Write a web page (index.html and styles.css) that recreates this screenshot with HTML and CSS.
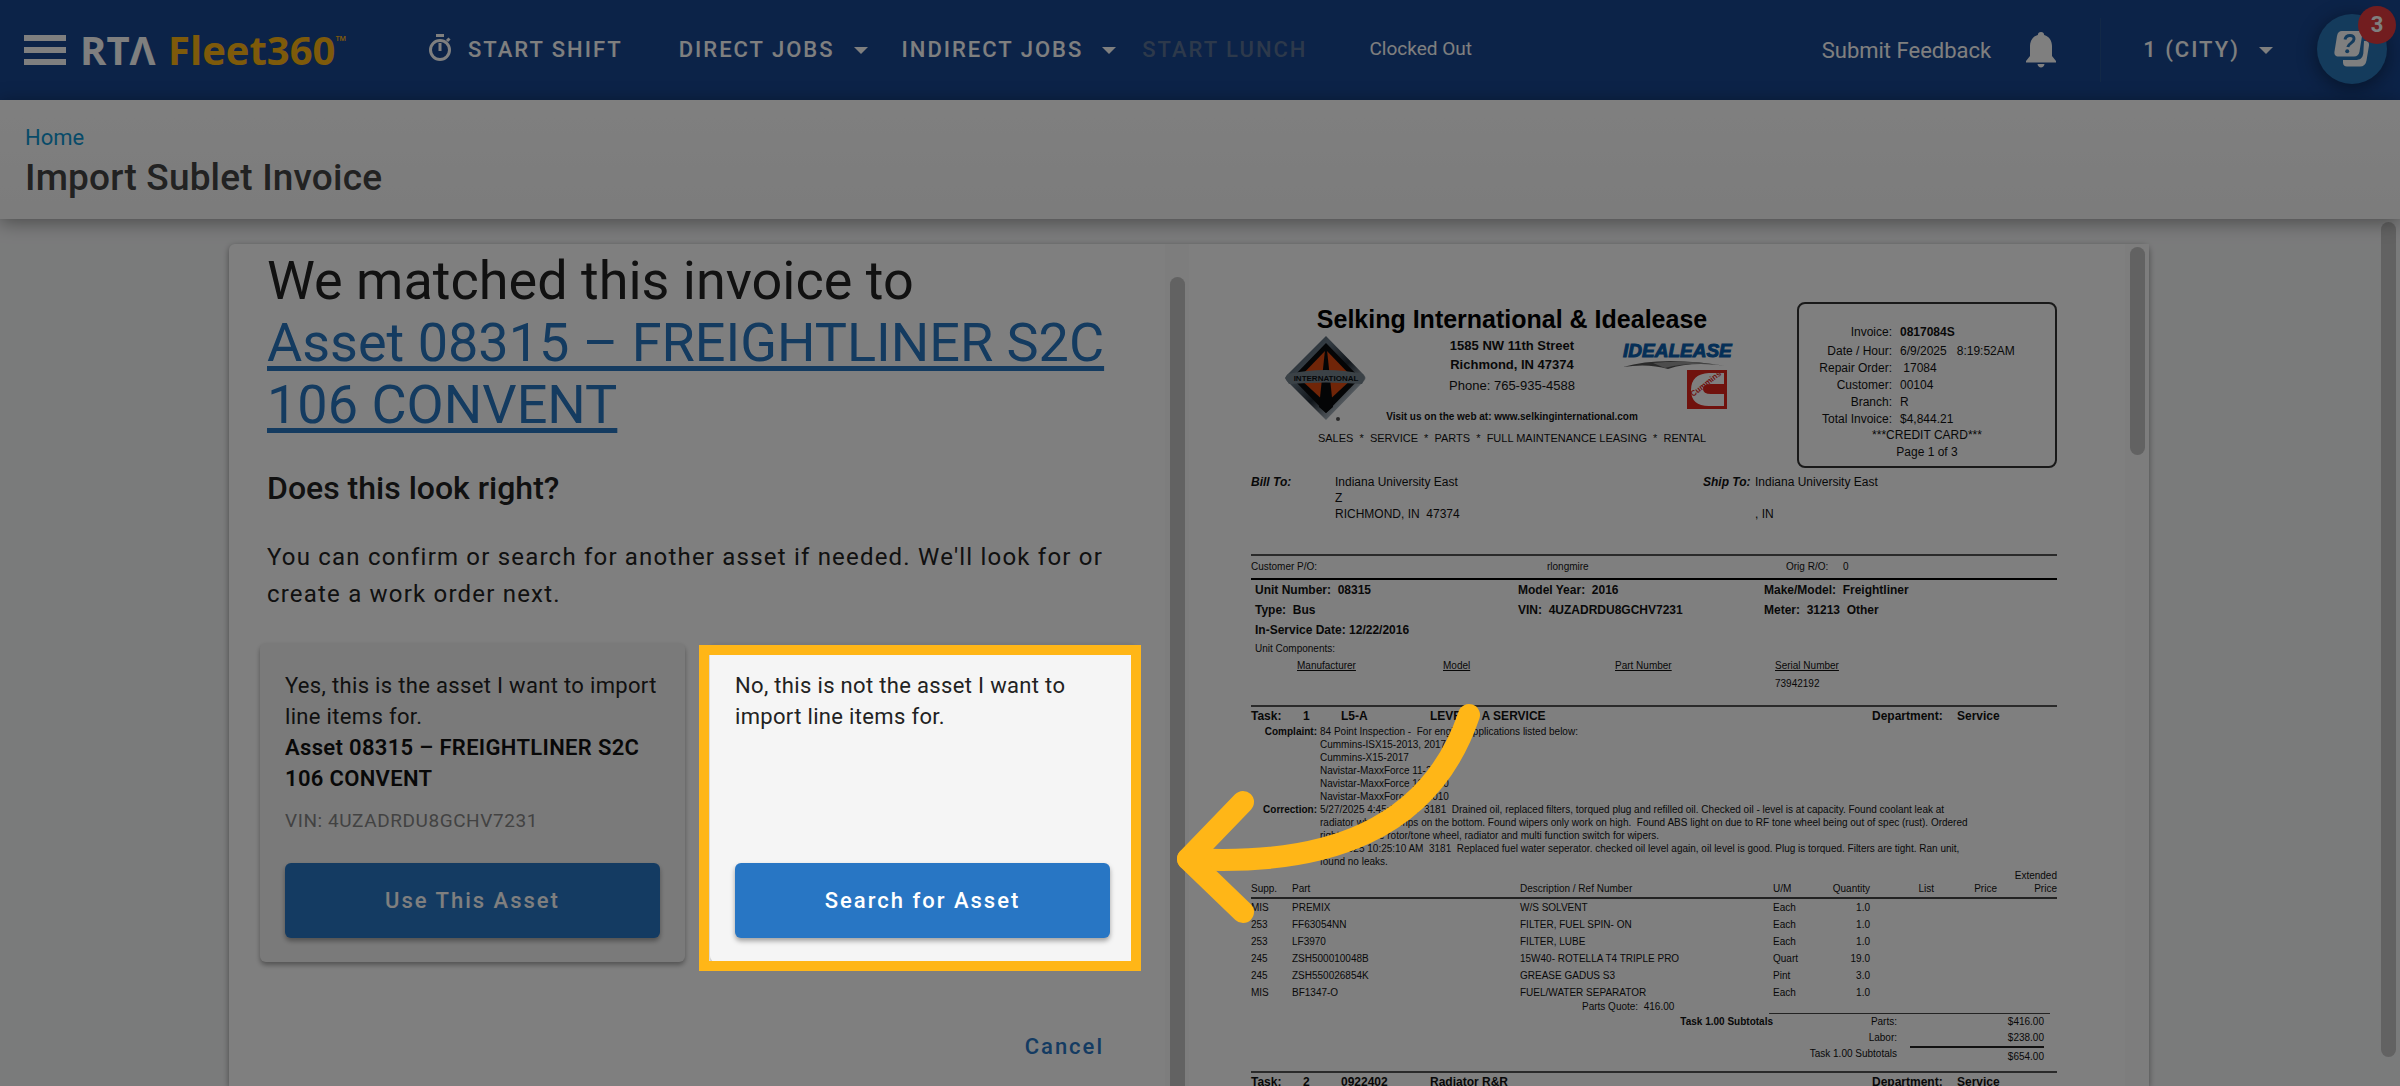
FILE: index.html
```html
<!DOCTYPE html>
<html lang="en">
<head>
<meta charset="utf-8">
<title>Import Sublet Invoice</title>
<link rel="stylesheet" href="styles.css">
</head>
<body>
<div class="app">
  <header class="topbar">
    <button class="icon-btn menu" aria-label="Menu"><span></span><span></span><span></span></button>
    <a class="logo" href="#"><span class="logo-rta">RTΛ</span><span class="logo-fleet">Fleet360</span><span class="logo-tm">™</span></a>
    <nav class="nav">
      <button class="nav-btn shift">
        <svg width="24" height="28" viewBox="0 0 24 28" fill="none" stroke="currentColor" stroke-width="3"><path d="M8 1.500h8M12 9v8M19 7l2.500-2.500"/><circle cx="12" cy="16" r="9.500"/></svg>
        START SHIFT</button>
      <button class="nav-btn direct">DIRECT JOBS <i class="caret"></i></button>
      <button class="nav-btn indirect">INDIRECT JOBS <i class="caret"></i></button>
      <button class="nav-btn" disabled>START LUNCH</button>
      <span class="status">Clocked Out</span>
    </nav>
    <div class="tools">
      <a class="feedback" href="#">Submit Feedback</a>
      <button class="icon-btn bell" aria-label="Notifications"><svg width="30" height="36" viewBox="0 0 30 36" fill="currentColor"><path d="M15 0c2 0 3 1.300 3.200 3C23.500 4.500 26 9 26 14v10l4 5v1.500H0V29l4-5V14C4 9 6.500 4.500 11.800 3 12 1.300 13 0 15 0zM11.500 32h7c-.3 2.200-1.700 3.500-3.500 3.500s-3.200-1.300-3.500-3.500z"/></svg></button>
      <button class="nav-btn city">1 (CITY) <i class="caret"></i></button>
      <button class="help" aria-label="Help">
        <svg width="36" height="36" viewBox="0 0 36 36"><path d="M30 10h1c3 0 4.500 1.800 4 4.500l-2.500 15C31.800 33.500 29.500 35.500 26 35.500H13c-2.500 0-4-1.500-4-4V29h12c5.500 0 7.500-2 8.300-6.500z" fill="#fff"/><path d="M8 0h16c3 0 4.500 1.800 4 5l-2.500 15.500c-.6 3.500-2.500 5-5.500 5H4.500C1.500 25.500 0 23.700.5 20.500L3 5C3.600 1.500 5.300 0 8 0z" fill="#fff"/><path d="M11 8.500c.6-3 2.300-4 5-4 2.600 0 4.200 1.400 4 3.600-.2 3.900-5.500 4-6.200 8" fill="none" stroke="#2876b8" stroke-width="3"/><circle cx="13.200" cy="20.300" r="2" fill="#2876b8"/></svg>
        <span class="badge">3</span>
      </button>
    </div>
  </header>

  <div class="page-head">
    <a class="crumb" href="#">Home</a>
    <h1 class="page-title">Import Sublet Invoice</h1>
  </div>

  <div class="body">
    <main class="sheet">
      <section class="panel match">
        <div class="match-content">
          <h2 class="headline">We matched this invoice to <a href="#">Asset 08315 – FREIGHTLINER S2C 106 CONVENT</a></h2>
          <h3 class="question">Does this look right?</h3>
          <p class="hint">You can confirm or search for another asset if needed. We'll look for or create a work order next.</p>
          <div class="choices">
            <article class="choice">
              <p>Yes, this is the asset I want to import line items for.</p>
              <p class="asset">Asset 08315 – FREIGHTLINER S2C 106 CONVENT</p>
              <p class="vin">VIN: 4UZADRDU8GCHV7231</p>
              <button class="primary">Use This Asset</button>
            </article>
            <article class="choice other">
              <p>No, this is not the asset I want to import line items for.</p>
              <button class="primary">Search for Asset</button>
              <div class="spotlight"></div>
              <svg class="arrow" width="320" height="230" viewBox="0 0 320 230" fill="none" stroke="#ffb617" stroke-width="22" stroke-linecap="round" stroke-linejoin="round"><path d="M299 15C260 130 157 167 18 159"/><path d="M73 102L18 159L73 212"/></svg>
            </article>
          </div>
          <div class="actions"><button class="cancel">Cancel</button></div>
        </div>
        <div class="track"><div class="thumb lower"></div></div>
      </section>

      <section class="panel preview">
        <div class="invoice">
          <div class="inv-head">
            <div class="letterhead">
              <h2>Selking International &amp; Idealease</h2>
              <div class="letter-row">
                <svg class="intl" width="81" height="86" viewBox="0 0 81 86">
                  <defs><linearGradient id="steel" x1="0" y1="0" x2="1" y2="1"><stop offset="0" stop-color="#2c3a48"/><stop offset=".3" stop-color="#6a7a88"/><stop offset=".55" stop-color="#222c36"/><stop offset=".8" stop-color="#c0ccd6"/><stop offset="1" stop-color="#46545f"/></linearGradient></defs>
                  <path d="M41 0l38 39q3 3 0 6L41 84 2 45q-3-3 0-6z" fill="url(#steel)"/>
                  <path d="M41 7l34 35-34 35L7 42z" fill="#080a0c"/>
                  <path d="M41 14l27 28-27 25-27-25z" fill="#e04a10"/>
                  <path d="M40 14h2l6 57-7 6-7-6z" fill="#080a0c"/>
                  <path d="M3 38q38-8 75 0l2 4-3 6q-36-3-73 0l-4-6z" fill="#77858f"/>
                  <text x="41" y="45" text-anchor="middle" font-size="8" font-weight="700" fill="#0a0e12">INTERNATIONAL</text>
                  <circle cx="53" cy="83" r="2" fill="#555"/>
                </svg>
                <div class="address">
                  <b>1585 NW 11th Street</b>
                  <b>Richmond, IN 47374</b>
                  <span class="phone">Phone: 765-935-4588</span>
                  <b class="web">Visit us on the web at: www.selkinginternational.com</b>
                </div>
                <div class="brands">
                  <span class="idealease">IDEALEASE</span>
                  <svg width="110" height="11" viewBox="0 0 110 11"><path d="M0 8Q40-4 110 8 70 1 45 10 25 4 0 8z" fill="#555"/><path d="M30 4q30-3 60 1-30-1-48 4z" fill="#999"/></svg>
                  <svg class="cummins" width="40" height="39" viewBox="0 0 40 39"><path d="M0 0h40v39H0z" fill="#e0251b"/><path d="M37 3v11H24q-8 0-8 5t8 5h13v12H22Q4 36 4 20T22 3z" fill="#fff"/><text x="6" y="27" font-size="8" font-weight="700" fill="#e0251b" transform="rotate(-38 6 27)">Cummins</text></svg>
                </div>
              </div>
              <p class="lines">SALES&nbsp; *&nbsp; SERVICE&nbsp; *&nbsp; PARTS&nbsp; *&nbsp; FULL MAINTENANCE LEASING&nbsp; *&nbsp; RENTAL</p>
            </div>
            <div class="inv-box">
              <dl>
                <dt>Invoice:</dt><dd><b>0817084S</b></dd>
                <dt>Date / Hour:</dt><dd>6/9/2025&nbsp;&nbsp; 8:19:52AM</dd>
                <dt>Repair Order:</dt><dd>&nbsp;17084</dd>
                <dt>Customer:</dt><dd>00104</dd>
                <dt>Branch:</dt><dd>R</dd>
                <dt>Total Invoice:</dt><dd>$4,844.21</dd>
              </dl>
              <p>***CREDIT CARD***</p>
              <p>Page 1 of 3</p>
            </div>
          </div>

          <div class="parties">
            <b><i>Bill To:</i></b><span>Indiana University East<br>Z<br>RICHMOND, IN&nbsp; 47374</span>
            <b><i>Ship To:</i></b><span>Indiana University East<br><br>, IN</span>
          </div>

          <div class="po"><span>Customer P/O:</span><span>rlongmire</span><span>Orig R/O:</span><span>0</span></div>
          <div class="unit">
            <span>Unit Number:&nbsp; 08315</span><span>Model Year:&nbsp; 2016</span><span>Make/Model:&nbsp; Freightliner</span>
            <span>Type:&nbsp; Bus</span><span>VIN:&nbsp; 4UZADRDU8GCHV7231</span><span>Meter:&nbsp; 31213&nbsp; Other</span>
            <span>In-Service Date: 12/22/2016</span>
          </div>
          <p class="components-label">Unit Components:</p>
          <div class="components">
            <u>Manufacturer</u><u>Model</u><u>Part Number</u><u>Serial Number</u>
            <span class="serial">73942192</span>
          </div>

          <div class="task"><span>Task:</span><span>1</span><span>L5-A</span><span>LEVEL&nbsp;&nbsp;&nbsp; A SERVICE</span><span>Department:</span><span>Service</span></div>
          <div class="notes">
            <b>Complaint:</b>
            <p>84 Point Inspection -&nbsp; For engine applications listed below:<br>Cummins-ISX15-2013, 2017<br>Cummins-X15-2017<br>Navistar-MaxxForce 11-2010<br>Navistar-MaxxForce 13-2010<br>Navistar-MaxxForce 15-2010</p>
            <b>Correction:</b>
            <p>5/27/2025 4:45:10 PM&nbsp; 3181&nbsp; Drained oil, replaced filters, torqued plug and refilled oil. Checked oil - level is at capacity. Found coolant leak at<br>radiator where clamps on the bottom. Found wipers only work on high.&nbsp; Found ABS light on due to RF tone wheel being out of spec (rust). Ordered<br>right front tone rotor/tone wheel, radiator and multi function switch for wipers.<br>5/28/2025 10:25:10 AM&nbsp; 3181&nbsp; Replaced fuel water seperator. checked oil level again, oil level is good. Plug is torqued. Filters are tight. Ran unit,<br>found no leaks.</p>
          </div>

          <table class="parts">
            <colgroup><col class="c-supp"><col class="c-part"><col class="c-desc"><col class="c-um"><col class="c-qty"><col class="c-list"><col class="c-price"><col></colgroup>
            <thead><tr><th>Supp.</th><th>Part</th><th>Description / Ref Number</th><th>U/M</th><th class="num">Quantity</th><th class="num">List</th><th class="num">Price</th><th class="num">Extended<br>Price</th></tr></thead>
            <tbody>
              <tr><td>MIS</td><td>PREMIX</td><td>W/S SOLVENT</td><td>Each</td><td class="num">1.0</td><td></td><td></td><td></td></tr>
              <tr><td>253</td><td>FF63054NN</td><td>FILTER, FUEL SPIN- ON</td><td>Each</td><td class="num">1.0</td><td></td><td></td><td></td></tr>
              <tr><td>253</td><td>LF3970</td><td>FILTER, LUBE</td><td>Each</td><td class="num">1.0</td><td></td><td></td><td></td></tr>
              <tr><td>245</td><td>ZSH500010048B</td><td>15W40- ROTELLA T4 TRIPLE PRO</td><td>Quart</td><td class="num">19.0</td><td></td><td></td><td></td></tr>
              <tr><td>245</td><td>ZSH550026854K</td><td>GREASE GADUS S3</td><td>Pint</td><td class="num">3.0</td><td></td><td></td><td></td></tr>
              <tr><td>MIS</td><td>BF1347-O</td><td>FUEL/WATER SEPARATOR</td><td>Each</td><td class="num">1.0</td><td></td><td></td><td></td></tr>
            </tbody>
          </table>
          <p class="quote">Parts Quote:&nbsp; 416.00</p>
          <div class="totals">
            <b>Task 1.00 Subtotals</b>
            <dl>
              <dt>Parts:</dt><dd>$416.00</dd>
              <dt>Labor:</dt><dd>$238.00</dd>
              <dt>Task 1.00 Subtotals</dt><dd class="sum">$654.00</dd>
            </dl>
          </div>
          <div class="task next"><span>Task:</span><span>2</span><span>0922402</span><span>Radiator R&amp;R</span><span>Department:</span><span>Service</span></div>
        </div>
        <div class="track"><div class="thumb short"></div></div>
      </section>
    </main>
    <div class="track page-track"><div class="thumb page-thumb"></div></div>
  </div>
</div>
</body>
</html>
```
FILE: styles.css
```css
* { box-sizing: border-box; }
body { margin: 0; font-family: Roboto, sans-serif; color: #222; background: #f5f6f7; }
h1, h2, h3, p, dl, dd { margin: 0; }
button { font: inherit; color: inherit; border: 0; padding: 0; background: none; }
a { color: inherit; text-decoration: none; }
svg { display: block; flex: none; }

.app { height: 100vh; display: flex; flex-direction: column; overflow: hidden; position: relative; }

/* Top bar */
.topbar { flex: none; height: 100px; padding: 0 13px 0 24px; display: flex; align-items: center; background: #184690; color: #fff; white-space: nowrap; }
.menu { width: 42px; height: 30px; display: flex; flex-direction: column; justify-content: space-between; }
.menu span { height: 6px; background: #fff; }
.logo { width: 269px; margin-left: 14px; display: flex; align-items: center; font: 700 40px/56px "Open Sans", sans-serif; }
.logo-rta { width: 88px; }
.logo-fleet { color: #fdb515; }
.logo-tm { color: #fdb515; font-size: 14px; line-height: 16px; align-self: flex-start; margin-top: 11px; }
.nav { margin-left: 79px; display: flex; align-items: center; }
.nav-btn { display: flex; align-items: center; font-size: 22px; line-height: 28px; font-weight: 500; letter-spacing: 2px; }
.nav-btn:disabled { color: #5b7396; }
.shift { gap: 16px; margin-right: 56px; }
.shift svg { margin-top: -4px; }
.caret { margin-left: 19px; border: 7px solid transparent; border-top-color: #fff; border-bottom: 0; }
.direct { margin-right: 34px; }
.indirect { margin-right: 26px; }
.status { margin-left: 62px; font-size: 19px; line-height: 24px; padding-bottom: 2px; }
.tools { margin-left: auto; display: flex; align-items: center; }
.feedback { font-size: 22px; }
.bell { margin: 0 44px 0 35px; }
.city { height: 64px; padding: 0 44px 0 42px; border-left: 1px solid #24518f; }
.help { position: relative; width: 70px; height: 70px; border-radius: 50%; background: #2876b8; display: grid; place-items: center; box-shadow: 0 4px 20px rgba(0,0,0,.45); margin-bottom: 2px; }
.badge { position: absolute; top: -8px; right: -9px; width: 38px; height: 38px; border-radius: 50%; background: #e43a3f; font-size: 22px; font-weight: 700; line-height: 38px; }

/* Page heading */
.page-head { flex: none; height: 119px; padding: 24px 25px 0; background: linear-gradient(#fff, #f8f8f8); box-shadow: 0 3px 18px rgba(0,0,0,.4); position: relative; }
.crumb { display: block; font-size: 22px; line-height: 28px; color: #0f96d2; }
.page-title { font-size: 37px; line-height: 44px; font-weight: 500; letter-spacing: .005em; padding-top: 4px; color: #444; }

/* Content */
.body { flex: 1; min-height: 0; display: flex; }
.sheet { flex: 1; max-width: 1920px; margin: 25px auto 0; display: flex; background: #fff; border-radius: 6px 6px 0 0; box-shadow: 0 2px 6px rgba(0,0,0,.4); }
.panel { flex: 1 1 0; min-width: 0; display: flex; }
.track { flex: none; width: 24px; padding: 3px 4px 0 5px; background: #fafafa; }
.thumb { border-radius: 8px; background: #c4c4c4; }
.lower { margin-top: 30px; height: 100%; }
.short { height: 208px; }
.page-track { width: 22px; padding: 3px 4px 29px 3px; background: none; }
.page-thumb { height: 100%; }

.match-content { flex: 1; padding: 6px 30px 0 31px; }
.headline, .question, .hint, .actions { padding: 0 7px; }
.headline { font-size: 54px; line-height: 62px; font-weight: 400; }
.headline a { display: block; color: #2876c0; text-decoration: underline; text-decoration-thickness: 5px; text-underline-offset: 5px; text-decoration-skip-ink: none; }
.question { margin-top: 34px; font-size: 32px; line-height: 36px; font-weight: 500; }
.hint { margin-top: 33px; font-size: 24px; line-height: 37px; letter-spacing: .05em; }
.choices { margin-top: 30px; display: grid; grid-template-columns: 1fr 1fr; gap: 25px; }
.choice { min-height: 319px; padding: 27px 25px 24px; display: flex; flex-direction: column; position: relative; background: #f5f5f5; border-radius: 6px; font-size: 22px; line-height: 31px; letter-spacing: .015em; box-shadow: 0 3px 5px rgba(0,0,0,.35); }
.asset { font-weight: 600; color: #111; }
.vin { margin-top: 12px; font-size: 19px; line-height: 30px; letter-spacing: .03em; color: #858585; }
.primary { margin-top: auto; height: 75px; border-radius: 6px; background: #2876c4; color: #fff; font-size: 22px; font-weight: 500; letter-spacing: 2px; box-shadow: 0 3px 5px rgba(0,0,0,.35); }
.spotlight { position: absolute; z-index: 10; top: 2px; right: -6px; bottom: -9px; left: -11px; border: 10px solid #ffb617; box-shadow: 0 0 0 3000px rgba(0,0,0,.5); pointer-events: none; }
.arrow { position: absolute; z-index: 11; left: 460px; top: 57px; pointer-events: none; }
.actions { margin-top: 71px; display: flex; justify-content: flex-end; }
.cancel { padding-right: 24px; font-size: 22px; line-height: 28px; font-weight: 500; letter-spacing: 2px; color: #2876c4; }

/* Invoice preview */
.invoice { flex: 1; min-width: 0; padding: 58px 68px 0 62px; font: 12px/16px "Liberation Sans", Arial, sans-serif; color: #111; white-space: nowrap; }
.inv-head { display: flex; justify-content: space-between; }
.letterhead { width: 522px; padding-top: 2px; text-align: center; }
.letterhead h2 { font-size: 25px; line-height: 30px; color: #000; }
.letter-row { display: flex; }
.intl { margin: 2px 0 0 34px; }
.address { width: 292px; padding-top: 2px; display: flex; flex-direction: column; font-size: 13px; line-height: 19px; }
.phone { margin-top: 2px; }
.web { margin-top: 15px; font-size: 10px; line-height: 14px; }
.brands { margin-left: -35px; padding-top: 9px; width: 110px; text-align: left; }
.idealease { display: block; font-size: 19px; line-height: 16px; font-weight: 700; font-style: italic; color: #0a5fae; -webkit-text-stroke: 1px #0a5fae; }
.cummins { margin-left: 64px; }
.lines { margin-top: 6px; font-size: 11px; }
.inv-box { width: 260px; height: 166px; padding-top: 20px; border: 2px solid #333; border-radius: 8px; line-height: 17px; text-align: center; }
.inv-box dl { display: grid; grid-template-columns: 93px 1fr; grid-template-rows: 19px repeat(4, 17px) 16px; column-gap: 8px; text-align: left; }
.inv-box dt { text-align: right; }
.parties { margin-top: 6px; display: grid; grid-template-columns: 84px 368px 52px 1fr; }
.po { margin-top: 32px; display: grid; grid-template-columns: 296px 239px 57px 1fr; font-size: 10px; line-height: 22px; border-top: 2px solid #555; border-bottom: 2px solid #000; }
.unit { padding-left: 4px; display: grid; grid-template-columns: 263px 246px 1fr; line-height: 20px; font-weight: 700; }
.components-label { padding-left: 4px; font-size: 10px; line-height: 17px; }
.components { padding-left: 46px; display: grid; grid-template-columns: 146px 172px 160px 1fr; font-size: 10px; line-height: 18px; }
.serial { grid-column: 4; }
.task { margin-top: 12px; display: grid; grid-template-columns: 52px 38px 89px 442px 85px 1fr; font-weight: 700; line-height: 18px; border-top: 2px solid #555; }
.notes { display: grid; grid-template-columns: 66px 1fr; column-gap: 3px; font-size: 10px; line-height: 13px; }
.notes b { text-align: right; }
.parts { width: 100%; margin-top: 1px; table-layout: fixed; border-collapse: collapse; font-size: 10px; line-height: 17px; }
.parts th { padding: 0 0 2px; font-weight: 400; line-height: 13px; text-align: left; vertical-align: bottom; border-bottom: 2px solid #444; }
.parts td { padding: 0; }
.parts .num { text-align: right; }
.c-supp { width: 41px; }
.c-part { width: 228px; }
.c-desc { width: 253px; }
.c-um { width: 36px; }
.c-qty { width: 61px; }
.c-list { width: 64px; }
.c-price { width: 63px; }
.quote { padding-left: 331px; font-size: 10px; line-height: 12px; }
.totals { display: flex; font-size: 10px; }
.totals > b { width: 522px; margin-right: -4px; padding-top: 1px; text-align: right; }
.totals dl { width: 281px; padding-right: 6px; display: grid; grid-template-columns: 128px 1fr; column-gap: 13px; text-align: right; border-top: 1px solid #444; }
.sum { border-top: 2px solid #222; line-height: 18px; }
.next { margin-top: 5px; }
```
